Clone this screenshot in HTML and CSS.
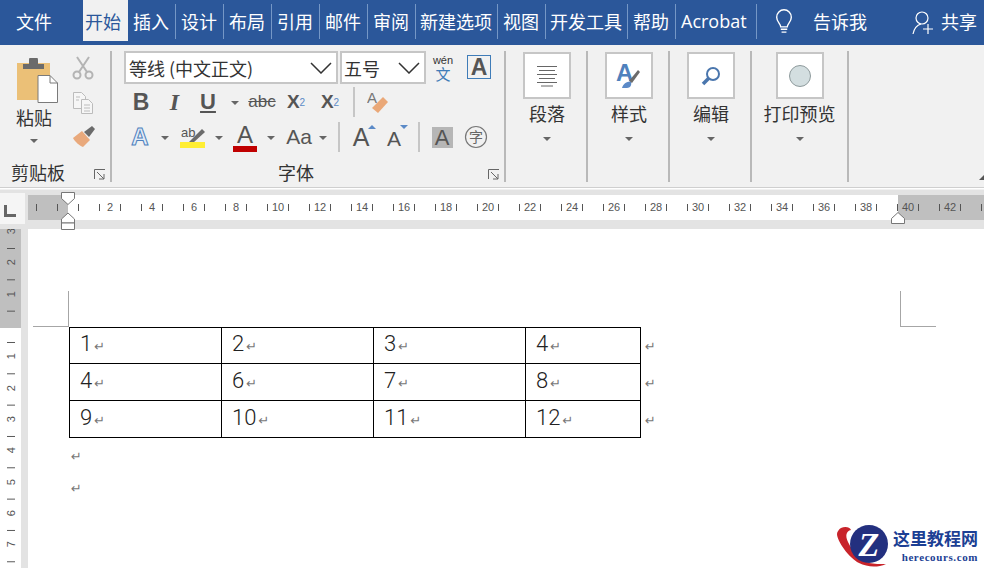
FILE: index.html
```html
<!DOCTYPE html>
<html lang="zh">
<head>
    <meta charset="utf-8">
    <title>文档 - Word</title>
    <link rel="stylesheet" href="styles.css">
</head>
<body>
    <!-- 标题选项卡 -->
    <div class="tabs">
        <span class="tab tab-file">文件</span>
        <span class="tab tab-active">开始</span>
        <span class="tab">插入</span>
        <span class="tab">设计</span>
        <span class="tab">布局</span>
        <span class="tab">引用</span>
        <span class="tab">邮件</span>
        <span class="tab">审阅</span>
        <span class="tab tab-narrow">新建选项</span>
        <span class="tab">视图</span>
        <span class="tab tab-narrow">开发工具</span>
        <span class="tab">帮助</span>
        <span class="tab tab-latin">Acrobat</span>
        <svg class="bulb" width="18" height="26" viewBox="0 0 20 32" fill="none" stroke="#fff" stroke-width="1.700">
            <path d="M6 22c0-4-5-6-5-12a9 9 0 0 1 18 0c0 6-5 8-5 12z"/>
            <path d="M6 25h8M7 28.500h6"/>
        </svg>
        <span class="tell">告诉我</span>
        <svg class="person" width="22" height="24" viewBox="0 0 22 24" fill="none" stroke="#fff" stroke-width="1.200">
            <circle cx="10" cy="7" r="6"/>
            <path d="M1 23c1-5 4-9 8-10M11 18h10M16 13v10"/>
        </svg>
        <span class="share">共享</span>
    </div>

    <!-- 功能区 -->
    <div class="ribbon">
        <div class="group group-clip">
            <div class="clip-body">
                <div class="paste">
                    <svg width="42" height="46" viewBox="0 0 42 46">
                        <rect x="0" y="5" width="33" height="37" fill="#ebc077"/>
                        <path d="M6 11V6h6V2a3 3 0 0 1 9 0v4h6v5z" fill="#6b6b6b"/>
                        <path d="M21 17.500h12l7.500 7.500v19.500H21z" fill="#fff" stroke="#7a7a7a"/>
                        <path d="M33 17.500v7.500h7.500" fill="none" stroke="#7a7a7a"/>
                    </svg>
                    <span class="big-label">粘贴</span>
                    <i class="caret"></i>
                </div>
                <div class="clip-tools">
                    <svg width="22" height="24" viewBox="0 0 22 24" fill="none" stroke="#b4b4b4" stroke-width="2">
                        <circle cx="5" cy="19" r="3.500"/>
                        <circle cx="17" cy="19" r="3.500"/>
                        <path d="M7 16 17 1M15 16 5 1"/>
                    </svg>
                    <svg width="22" height="24" viewBox="0 0 22 24" fill="#f6f6f6" stroke="#bcbcbc">
                        <path d="M1.500 1.500h8l4 4v12h-12z"/>
                        <path d="M9.500 8.500h7l4 4v10h-11z"/>
                        <path d="M4 6h4M4 9h3M12 14h6M12 17h6M12 20h6"/>
                    </svg>
                    <svg width="24" height="22" viewBox="0 0 24 22">
                        <path d="M1 12 10 5l8 9-7 7c-3-1-8-5-10-9z" fill="#e9a97c"/>
                        <path d="m12 6 8-6 3 3-6 8z" fill="#6b6b6b"/>
                    </svg>
                </div>
            </div>
            <div class="group-foot">
                <span class="foot-clip">剪贴板</span>
                <svg class="launcher" width="12" height="11" viewBox="0 0 12 11" fill="none" stroke="#666"><path d="M.5 10V.5H11M3 3l7 7M10 5v5H5"/></svg>
            </div>
        </div>

        <div class="group group-font">
            <div class="font-row">
                <div class="select select-font">
                    <span>等线 (中文正文)</span>
                    <svg width="22" height="12" viewBox="0 0 22 12" fill="none" stroke="#333" stroke-width="1.500"><path d="m1 1 10 10L21 1"/></svg>
                </div>
                <div class="select select-size">
                    <span>五号</span>
                    <svg width="22" height="12" viewBox="0 0 22 12" fill="none" stroke="#333" stroke-width="1.500"><path d="m1 1 10 10L21 1"/></svg>
                </div>
                <div class="pinyin"><span class="pinyin-top">wén</span><span class="pinyin-char">文</span></div>
                <div class="char-box">A</div>
            </div>
            <div class="tool-row row-two">
                <span class="cell c34 t-bold">B</span>
                <span class="cell c33 t-italic">I</span>
                <span class="cell c34 t-under">U</span>
                <span class="cell c20"><i class="caret"></i></span>
                <span class="cell c34 t-strike">abc</span>
                <span class="cell c34 t-script">X<sub>2</sub></span>
                <span class="cell c34 t-script">X<sup>2</sup></span>
                <i class="tool-sep sep-one"></i>
                <span class="cell c34">
                    <svg width="22" height="24" viewBox="0 0 22 24">
                        <text x="0" y="13" class="svg-a">A</text>
                        <path d="m5 18 11-11 5 5-10 11z" fill="#eaa878"/>
                    </svg>
                </span>
            </div>
            <div class="tool-row row-three">
                <span class="cell c32 t-outline">A</span>
                <span class="cell c18"><i class="caret"></i></span>
                <span class="cell c34 c-gap">
                    <svg width="26" height="24" viewBox="0 0 26 24">
                        <text x="1" y="12" class="svg-ab">ab</text>
                        <path d="m9 17 13-13 3 3-12 11z" fill="#6b6b6b"/>
                        <rect x="0" y="17" width="25" height="6" fill="#ffee33"/>
                    </svg>
                </span>
                <span class="cell c18"><i class="caret"></i></span>
                <span class="cell c34 t-color">A<i class="color-bar"></i></span>
                <span class="cell c18"><i class="caret"></i></span>
                <span class="cell c34 c-gap t-case">Aa</span>
                <span class="cell c14"><i class="caret"></i></span>
                <i class="tool-sep sep-two"></i>
                <span class="cell c34 t-grow">A<i class="tri tri-up"></i></span>
                <span class="cell c32 t-shrink">A<i class="tri tri-down"></i></span>
                <i class="tool-sep sep-three"></i>
                <span class="cell c34"><span class="t-shade">A</span></span>
                <span class="cell c34">
                    <svg width="24" height="24" viewBox="0 0 24 24">
                        <circle cx="12" cy="12" r="10.500" fill="none" stroke="#777" stroke-width="1.200"/>
                        <text x="12" y="17" class="svg-zi">字</text>
                    </svg>
                </span>
            </div>
            <div class="group-foot">
                <span class="foot-font">字体</span>
                <svg class="launcher" width="12" height="11" viewBox="0 0 12 11" fill="none" stroke="#666"><path d="M.5 10V.5H11M3 3l7 7M10 5v5H5"/></svg>
            </div>
        </div>

        <div class="group group-big g-82">
            <div class="big-box">
                <svg width="22" height="22" viewBox="0 0 22 22" stroke="#666"><path d="M1 1.500h20M3 5.500h16M1 9.500h20M3 13.500h16M1 17.500h20M5 21h12"/></svg>
            </div>
            <span class="big-label">段落</span>
            <i class="caret"></i>
        </div>
        <div class="group group-big g-82">
            <div class="big-box">
                <svg width="26" height="32" viewBox="0 0 26 32">
                    <text x="0" y="21" class="svg-style">A</text>
                    <path d="m13 21 9-11 2 2-8 11z" fill="#6b6b6b"/>
                    <path d="M6 28c1-4 5-7 9-6 1 3-1 6-4 6z" fill="#5b8ac7"/>
                </svg>
            </div>
            <span class="big-label">样式</span>
            <i class="caret"></i>
        </div>
        <div class="group group-big g-82">
            <div class="big-box">
                <svg width="20" height="20" viewBox="0 0 20 20" fill="none" stroke="#4a76ad">
                    <circle cx="12" cy="8" r="6" stroke-width="2"/>
                    <path d="M8 12 2 18" stroke-width="3.500"/>
                </svg>
            </div>
            <span class="big-label">编辑</span>
            <i class="caret"></i>
        </div>
        <div class="group group-big g-98">
            <div class="big-box">
                <svg width="24" height="24" viewBox="0 0 24 24"><circle cx="12" cy="12" r="10.500" fill="#d3dee0" stroke="#8e9a9c"/></svg>
            </div>
            <span class="big-label">打印预览</span>
            <i class="caret"></i>
        </div>
        <svg class="collapse" width="5" height="5" viewBox="0 0 5 5"><path d="M0 5 5 0v5z" fill="#555"/></svg>
    </div>

    <!-- 水平标尺 -->
    <div class="h-ruler">
        <div class="corner"><i class="corner-mark"></i></div>
        <div class="h-track">
            <span>2</span><span>4</span><span>6</span><span>8</span><span>10</span>
            <span>12</span><span>14</span><span>16</span><span>18</span><span>20</span>
            <span>22</span><span>24</span><span>26</span><span>28</span><span>30</span>
            <span>32</span><span>34</span><span>36</span><span>38</span><span>40</span>
            <span>42</span>
        </div>
        <svg class="marker marker-left" width="14" height="38" viewBox="0 0 14 38" fill="#fff" stroke="#777">
            <path d="M.5 .5h13v6l-6.500 6-6.500-6z"/>
            <path d="m7 21 6.500 6v4h-13v-4z"/>
            <path d="M.5 31h13v6.500H.5z"/>
        </svg>
        <svg class="marker marker-right" width="14" height="12" viewBox="0 0 14 12" fill="#fff" stroke="#777">
            <path d="m7 .5 6.500 6v5h-13v-5z"/>
        </svg>
    </div>

    <div class="doc">
        <!-- 垂直标尺 -->
        <div class="v-ruler">
            <span>3</span><span>2</span><span>1</span><span></span><span>1</span>
            <span>2</span><span>3</span><span>4</span><span>5</span><span>6</span><span>7</span>
        </div>

        <div class="page">
            <div class="crop-row">
                <i class="crop crop-left"></i>
                <i class="crop crop-right"></i>
            </div>
            <table class="doc-table">
                <tr>
                    <td class="col-wide">1<i class="ret">↵</i></td>
                    <td class="col-wide">2<i class="ret">↵</i></td>
                    <td class="col-wide">3<i class="ret">↵</i></td>
                    <td class="col-last">4<i class="ret">↵</i></td>
                    <td class="row-end"><i class="ret">↵</i></td>
                </tr>
                <tr>
                    <td>4<i class="ret">↵</i></td>
                    <td>6<i class="ret">↵</i></td>
                    <td>7<i class="ret">↵</i></td>
                    <td>8<i class="ret">↵</i></td>
                    <td class="row-end"><i class="ret">↵</i></td>
                </tr>
                <tr>
                    <td>9<i class="ret">↵</i></td>
                    <td>10<i class="ret">↵</i></td>
                    <td>11<i class="ret">↵</i></td>
                    <td>12<i class="ret">↵</i></td>
                    <td class="row-end"><i class="ret">↵</i></td>
                </tr>
            </table>
            <p class="para"><i class="ret">↵</i></p>
            <p class="para"><i class="ret">↵</i></p>
        </div>
    </div>

    <!-- 水印 -->
    <div class="watermark">
        <svg width="56" height="43" viewBox="0 0 56 43">
            <path d="M5 3c4-2 9-1 10 2-5 1-6 6-3 12 4 9 12 17 21 21 5 1 11 1 17 1-9 4-19 3-27-1C13 33 1 16 1 9c0-2 2-5 4-6z" fill="#c8242b"/>
            <circle cx="33" cy="19" r="19" fill="#23307f"/>
            <text x="33" y="31" class="logo-z">Z</text>
        </svg>
        <div class="mark-text">
            <span class="mark-cn">这里教程网</span>
            <span class="mark-en">herecours.com</span>
        </div>
    </div>
</body>
</html>
```

FILE: styles.css
```css
* {
    box-sizing: border-box;
}
body {
    margin: 0;
    width: 984px;
    height: 568px;
    overflow: hidden;
    position: relative;
    background-color: #fff;
    font-family: "Noto Sans CJK SC", "Liberation Sans", sans-serif;
    color: #333;
}
i {
    font-style: normal;
}

/* 选项卡 */
.tabs {
    display: flex;
    height: 45px;
    padding-top: 4px;
    background-color: #2b579a;
    color: #fff;
    font-size: 18px;
    line-height: 35px;
}
.tabs > * {
    flex: none;
}
.tab {
    padding: 0 6px 0 5px;
    height: 35px;
    border-right: 1px solid #7597c6;
    white-space: nowrap;
}
.tab-file {
    width: 83px;
    padding-left: 16px;
    border-right: 0;
}
.tab-active {
    height: 41px;
    width: 45px;
    margin-top: -4px;
    padding: 4px 0 0 2px;
    background-color: #f1f1f1;
    color: #2b579a;
    border-right: 0;
}
.tab-narrow {
    padding: 0 5px 0 4px;
}
.tab-latin {
    font-family: "Open Sans", "Liberation Sans", sans-serif;
    width: 81px;
}
.bulb {
    margin: 5px 0 0 18px;
}
.tell {
    margin-left: 20px;
}
.person {
    margin: 7px 0 0 45px;
}
.share {
    margin-left: 7px;
}

/* 功能区 */
.ribbon {
    display: flex;
    position: relative;
    height: 143px;
    padding-top: 6px;
    background-color: #f1f1f1;
    border-bottom: 1px solid #cfcfcf;
}
.group {
    display: flex;
    flex-direction: column;
    height: 131px;
    border-right: 2px solid #b9b9b9;
}
.group-clip {
    width: 112px;
}
.group-font {
    width: 394px;
    padding-left: 12px;
}
.group-big {
    align-items: center;
    padding-top: 1px;
}
.g-82 {
    width: 82px;
    padding-left: 2px;
}
.g-98 {
    width: 97px;
}
.clip-body {
    display: flex;
    height: 111px;
}
.paste {
    display: flex;
    flex-direction: column;
    align-items: center;
    width: 70px;
    padding: 7px 0 0 5px;
}
.paste .big-label {
    margin: 0 0 0 -7px;
}
.paste .caret {
    margin-left: -7px;
}
.clip-tools {
    display: flex;
    flex-direction: column;
    gap: 11px;
    padding: 5px 0 0 2px;
}
.big-label {
    font-size: 18px;
    line-height: 26px;
    margin-top: 1px;
}
.caret {
    display: block;
    width: 0;
    height: 0;
    margin-top: 11px;
    border-left: 4px solid transparent;
    border-right: 4px solid transparent;
    border-top: 4px solid #666;
}
.paste .caret {
    margin-top: 9px;
}
.cell .caret {
    margin-top: 2px;
}
.group-foot {
    display: flex;
    justify-content: space-between;
    align-items: center;
    margin-top: auto;
    height: 20px;
    font-size: 18px;
    line-height: 20px;
}
.foot-clip {
    margin-left: 11px;
}
.foot-font {
    margin-left: 154px;
}
.launcher {
    margin: 4px 4px 0 0;
}
.big-box {
    display: flex;
    align-items: center;
    justify-content: center;
    flex: none;
    width: 48px;
    height: 47px;
    background-color: #fff;
    border: 2px solid #c6c6c6;
}
.collapse {
    position: absolute;
    right: 0;
    top: 130px;
}

/* 字体组 */
.font-row {
    display: flex;
    align-items: flex-start;
    height: 34px;
}
.select {
    display: flex;
    align-items: center;
    justify-content: space-between;
    height: 33px;
    background-color: #fff;
    border: 2px solid #c6c6c6;
    font-size: 18px;
}
.select-font {
    width: 214px;
    padding: 0 4px 0 3px;
}
.select-size {
    width: 86px;
    margin-left: 2px;
    padding: 0 4px 0 2px;
}
.pinyin {
    display: flex;
    flex-direction: column;
    align-items: center;
    width: 24px;
    margin-left: 5px;
}
.pinyin-top {
    font-family: "Liberation Sans", sans-serif;
    font-size: 11px;
    line-height: 12px;
    margin-top: 3px;
}
.pinyin-char {
    font-size: 15px;
    line-height: 16px;
    color: #3f7cb8;
}
.char-box {
    width: 24px;
    height: 24px;
    margin: 4px 0 0 12px;
    border: 1px solid #3f7cb8;
    font: bold 23px/23px "Liberation Sans", sans-serif;
    text-align: center;
    color: #555;
}
.tool-row {
    display: flex;
    align-items: center;
    font-family: "Liberation Sans", sans-serif;
    color: #555;
}
.row-two {
    height: 34px;
}
.row-three {
    height: 36px;
}
.cell {
    display: flex;
    align-items: center;
    justify-content: center;
    position: relative;
    height: 30px;
}
.c14 { width: 14px; }
.c18 { width: 18px; }
.c20 { width: 20px; }
.c32 { width: 32px; }
.c33 { width: 33px; }
.c34 { width: 34px; }
.c-gap {
    margin-left: 2px;
}
.tool-sep {
    display: block;
    width: 2px;
    height: 30px;
    background-color: #c6c6c6;
}
.sep-one {
    margin: 0 6px;
}
.sep-two {
    margin: 0 4px 0 8px;
}
.sep-three {
    margin: 0 5px 0 8px;
}
.t-bold {
    font-size: 23px;
    font-weight: bold;
}
.t-italic {
    font: italic bold 24px "Liberation Serif", serif;
}
.t-under {
    font-size: 22px;
    font-weight: bold;
    text-decoration: underline;
}
.t-strike {
    font-size: 17px;
    text-decoration: line-through;
}
.t-script {
    font-size: 19px;
    font-weight: bold;
}
.t-script sub,
.t-script sup {
    font-size: 10px;
    font-weight: normal;
    color: #5b8ac7;
}
.t-outline {
    font-size: 24px;
    font-weight: bold;
    color: #e3edf8;
    -webkit-text-stroke: 1px #4f81bd;
}
.t-color {
    font-size: 24px;
    line-height: 24px;
    padding-bottom: 4px;
}
.color-bar {
    position: absolute;
    left: 5px;
    right: 5px;
    bottom: 0;
    height: 6px;
    background-color: #c00000;
}
.t-case {
    font-size: 21px;
}
.t-grow {
    font-size: 25px;
}
.t-shrink {
    font-size: 21px;
    padding-top: 3px;
}
.tri {
    position: absolute;
    top: 3px;
    right: 2px;
    border-left: 4px solid transparent;
    border-right: 4px solid transparent;
}
.tri-up {
    border-bottom: 4px solid #5b8ac7;
}
.tri-down {
    border-top: 4px solid #5b8ac7;
}
.t-shade {
    display: block;
    width: 21px;
    height: 21px;
    background-color: #b6b6b6;
    font-size: 22px;
    line-height: 21px;
    text-align: center;
}
.svg-a {
    font: 15px "Liberation Sans", sans-serif;
    fill: #777;
}
.svg-ab {
    font: 13px "Liberation Sans", sans-serif;
    fill: #555;
}
.svg-zi {
    font: 14px "Noto Sans CJK SC", sans-serif;
    fill: #666;
    text-anchor: middle;
}
.svg-style {
    font: bold 24px "Liberation Sans", sans-serif;
    fill: #4f81bd;
}

/* 水平标尺 */
.h-ruler {
    display: flex;
    position: relative;
    height: 40px;
    margin-top: 1px;
    background-color: #e3e3e3;
    border-top: 1px solid #f1f1f1;
}
.corner {
    width: 28px;
    padding: 3px 3px 4px 0;
}
.corner-mark {
    display: block;
    width: 25px;
    height: 31px;
    background-color: #f5f5f5;
    position: relative;
}
.corner-mark::after {
    content: "";
    position: absolute;
    left: 4px;
    top: 12px;
    width: 9px;
    height: 9px;
    border-left: 3px solid #666;
    border-bottom: 3px solid #666;
}
.h-track {
    display: flex;
    width: 956px;
    height: 25px;
    margin-top: 5px;
    padding-left: 61px;
    overflow: hidden;
    font: 11px/25px "Liberation Sans", sans-serif;
    color: #555;
    background:
        linear-gradient(to right, #555 1px, transparent 1px) 8px 9px / 21px 7px repeat-x,
        linear-gradient(to right, #bfbfbf 40px, #fff 40px, #fff 870px, #bfbfbf 870px);
}
.h-track span {
    flex: none;
    width: 42px;
    text-align: center;
}
.marker {
    position: absolute;
}
.marker-left {
    left: 61px;
    top: 2px;
}
.marker-right {
    left: 891px;
    top: 22px;
}

/* 文档区 */
.doc {
    display: flex;
    height: 339px;
}
.v-ruler {
    width: 28px;
    flex: none;
    padding-top: 0;
    overflow: hidden;
    font: 11px "Liberation Sans", sans-serif;
    color: #555;
    border-right: 7px solid #e3e3e3;
    background:
        linear-gradient(#555 1px, transparent 1px) 7px 19px / 8px 31.33px repeat-y,
        linear-gradient(#bfbfbf 99px, #fff 99px);
}
.v-ruler span {
    display: flex;
    align-items: center;
    justify-content: center;
    width: 21px;
    height: 31.33px;
    writing-mode: vertical-rl;
    transform: rotate(180deg);
}
.v-ruler span:first-child {
    margin-top: -13px;
}
.page {
    flex: 1;
    padding: 62px 48px 0 5px;
}
.crop-row {
    display: flex;
    justify-content: space-between;
    height: 36px;
}
.crop {
    display: block;
    width: 36px;
    height: 36px;
    border-bottom: 1px solid #a6a6a6;
}
.crop-left {
    border-right: 1px solid #a6a6a6;
}
.crop-right {
    border-left: 1px solid #a6a6a6;
}
.doc-table {
    border-collapse: collapse;
    margin-left: 36px;
    font: 300 22px/24px Roboto, "Liberation Sans", sans-serif;
    color: #222;
}
.doc-table td {
    height: 37px;
    padding: 0 0 3px 10px;
    border: 1px solid #000;
    white-space: nowrap;
}
.doc-table tr:first-child td {
    height: 36px;
}
.doc-table .col-wide {
    width: 152px;
}
.doc-table .col-last {
    width: 115px;
}
.doc-table .row-end {
    border: 0;
    padding-left: 2px;
}
.ret {
    margin-left: 2px;
    font: 13px "DejaVu Sans", sans-serif;
    color: #777;
}
.para {
    margin: 0 0 0 38px;
    height: 32px;
    line-height: 32px;
}
.para .ret {
    margin-left: 0;
}

/* 水印 */
.watermark {
    display: flex;
    position: absolute;
    right: 0;
    bottom: 0;
    width: 148px;
    height: 43px;
    background-color: #fff;
}
.logo-z {
    font: italic bold 34px "Liberation Serif", serif;
    fill: #fff;
    text-anchor: middle;
}
.mark-text {
    display: flex;
    flex-direction: column;
    align-items: flex-end;
    flex: 1;
    padding: 2px 6px 0 0;
    color: #1c3f94;
}
.mark-cn {
    font-size: 17px;
    font-weight: bold;
    line-height: 22px;
}
.mark-en {
    font: bold 11px/16px "Liberation Serif", serif;
    letter-spacing: 0.6px;
}
```
